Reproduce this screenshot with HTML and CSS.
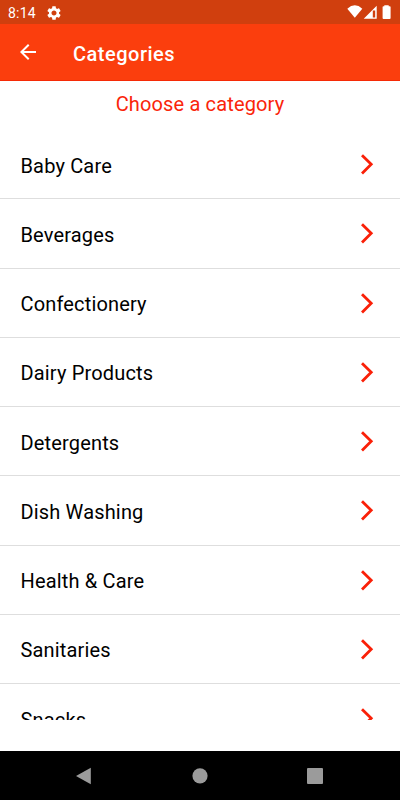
FILE: index.html
```html
<!DOCTYPE html>
<html lang="en">

<head>
	<title>Categories</title>
	<meta charset="UTF-8">
	<meta name="viewport" content="width=device-width, initial-scale=1.0">
	<link rel="stylesheet" href="styles.css">
</head>

<body>
	<svg class="defs" width="0" height="0">
		<symbol id="chevron" viewBox="0 0 14 22">
			<path d="M2 2.2 L11.2 11.3 L2 20.4" />
		</symbol>
	</svg>
	<div class="status-bar">
		<span class="time">8:14</span>
		<svg class="gear" viewBox="2 2 20 20">
			<path d="M19.14 12.94c.04-.3.06-.61.06-.94 0-.32-.02-.64-.07-.94l2.03-1.58c.18-.14.23-.41.12-.61l-1.92-3.32c-.12-.22-.37-.29-.59-.22l-2.39.96c-.5-.38-1.03-.7-1.62-.94l-.36-2.54c-.04-.24-.24-.41-.48-.41h-3.84c-.24 0-.43.17-.47.41l-.36 2.54c-.59.24-1.13.57-1.62.94l-2.39-.96c-.22-.08-.47 0-.59.22L2.74 8.87c-.12.21-.08.47.12.61l2.03 1.58c-.05.3-.09.63-.09.94s.02.64.07.94l-2.03 1.58c-.18.14-.23.41-.12.61l1.92 3.32c.12.22.37.29.59.22l2.39-.96c.5.38 1.03.7 1.62.94l.36 2.54c.05.24.24.41.48.41h3.84c.24 0 .44-.17.47-.41l.36-2.54c.59-.24 1.13-.56 1.62-.94l2.39.96c.22.08.47 0 .59-.22l1.92-3.32c.12-.22.07-.47-.12-.61l-2.01-1.58zM12 15.6c-1.98 0-3.6-1.62-3.6-3.6s1.62-3.6 3.6-3.6 3.6 1.62 3.6 3.6-1.62 3.6-3.6 3.6z" />
		</svg>
		<svg class="indicators" viewBox="0 0 46 16">
			<path d="M0.3 4.7 Q7.8 -2 15.3 4.7 L7.8 13.8 Z" />
			<path fill-rule="evenodd" d="M29.7 1.7 V14.7 H16.7 Z M25.8 6.4 V13.4 H28.2 V6.4 Z" />
			<path d="M37.8 1.3 h4.4 v.9 h1 q.9 0 .9 .9 v10.9 q0 .9 -.9 .9 h-6.2 q-.9 0 -.9 -.9 v-10.9 q0 -.9 .9 -.9 h.8z" transform="translate(-.5 0)" />
		</svg>
	</div>
	<header>
		<svg class="back" viewBox="0 0 16 16">
			<path d="M16 7H3.83l5.59-5.59L8 0 0 8l8 8 1.41-1.41L3.83 9H16z" />
		</svg>
		<h1>Categories</h1>
	</header>
	<main>
		<h2>Choose a category</h2>
		<ul class="categories">
			<li>Baby Care<svg class="chevron"><use href="#chevron" /></svg></li>
			<li>Beverages<svg class="chevron"><use href="#chevron" /></svg></li>
			<li>Confectionery<svg class="chevron"><use href="#chevron" /></svg></li>
			<li>Dairy Products<svg class="chevron"><use href="#chevron" /></svg></li>
			<li>Detergents<svg class="chevron"><use href="#chevron" /></svg></li>
			<li>Dish Washing<svg class="chevron"><use href="#chevron" /></svg></li>
			<li>Health &amp; Care<svg class="chevron"><use href="#chevron" /></svg></li>
			<li>Sanitaries<svg class="chevron"><use href="#chevron" /></svg></li>
			<li>Snacks<svg class="chevron"><use href="#chevron" /></svg></li>
		</ul>
	</main>
	<nav>
		<svg viewBox="0 0 18 18"><path d="M1 9 L15.8 .8 V17.2 Z" /></svg>
		<svg viewBox="0 0 18 18"><circle cx="9" cy="8.8" r="7.6" /></svg>
		<svg viewBox="0 0 18 18"><rect x="1" y="1" width="16" height="16" rx="1" /></svg>
	</nav>
</body>

</html>
```
FILE: styles.css
```css
* {
	box-sizing: border-box;
}

body {
	display: flex;
	flex-direction: column;
	height: 800px;
	margin: 0;
	overflow: hidden;
	font-family: Roboto, sans-serif;
	background-color: #fff;
}

.defs {
	position: absolute;
}

.status-bar {
	display: flex;
	align-items: center;
	height: 24px;
	padding: 0 7px 0 8px;
	color: #fff;
	background-color: #d03f0e;
}

.time {
	width: 39px;
	padding-top: 2px;
	font-size: 14px;
	letter-spacing: 0.2px;
}

.gear {
	width: 14px;
	height: 14px;
	margin-top: 1px;
	fill: #fff;
}

.indicators {
	width: 46px;
	height: 16px;
	margin: 0 0 0 auto;
	fill: #fff;
}

header {
	display: flex;
	align-items: center;
	height: 57px;
	padding-left: 20px;
	color: #fff;
	background-color: #fb3e0d;
	border-bottom: 1px solid #f52a06;
}

.back {
	width: 16px;
	height: 16px;
	fill: #fff;
}

h1 {
	margin: 4px 0 0 37px;
	font-size: 20px;
	font-weight: 500;
	letter-spacing: 0.5px;
}

main {
	flex: 1;
	background-color: #fff;
}

h2 {
	height: 49px;
	margin: 0;
	padding-top: 11px;
	font-size: 20px;
	font-weight: 400;
	line-height: 24px;
	letter-spacing: 0.15px;
	text-align: center;
	color: #fa250a;
}

.categories {
	height: 590px;
	margin: 0;
	padding: 0;
	overflow: hidden;
	list-style: none;
}

li {
	display: flex;
	align-items: center;
	justify-content: space-between;
	height: 69.25px;
	padding: 3px 26px 0 20.5px;
	font-size: 20px;
	letter-spacing: 0.16px;
	color: #000;
	border-bottom: 1px solid #dedede;
}

.chevron {
	width: 14px;
	height: 22px;
	margin-top: -3px;
	fill: none;
	stroke: #fa2008;
	stroke-width: 2.8;
}

nav {
	display: flex;
	align-items: center;
	justify-content: space-between;
	height: 49px;
	padding: 0 76px 0 75px;
	background-color: #000;
}

nav svg {
	width: 18px;
	height: 18px;
	fill: #9b9b9b;
}
```
